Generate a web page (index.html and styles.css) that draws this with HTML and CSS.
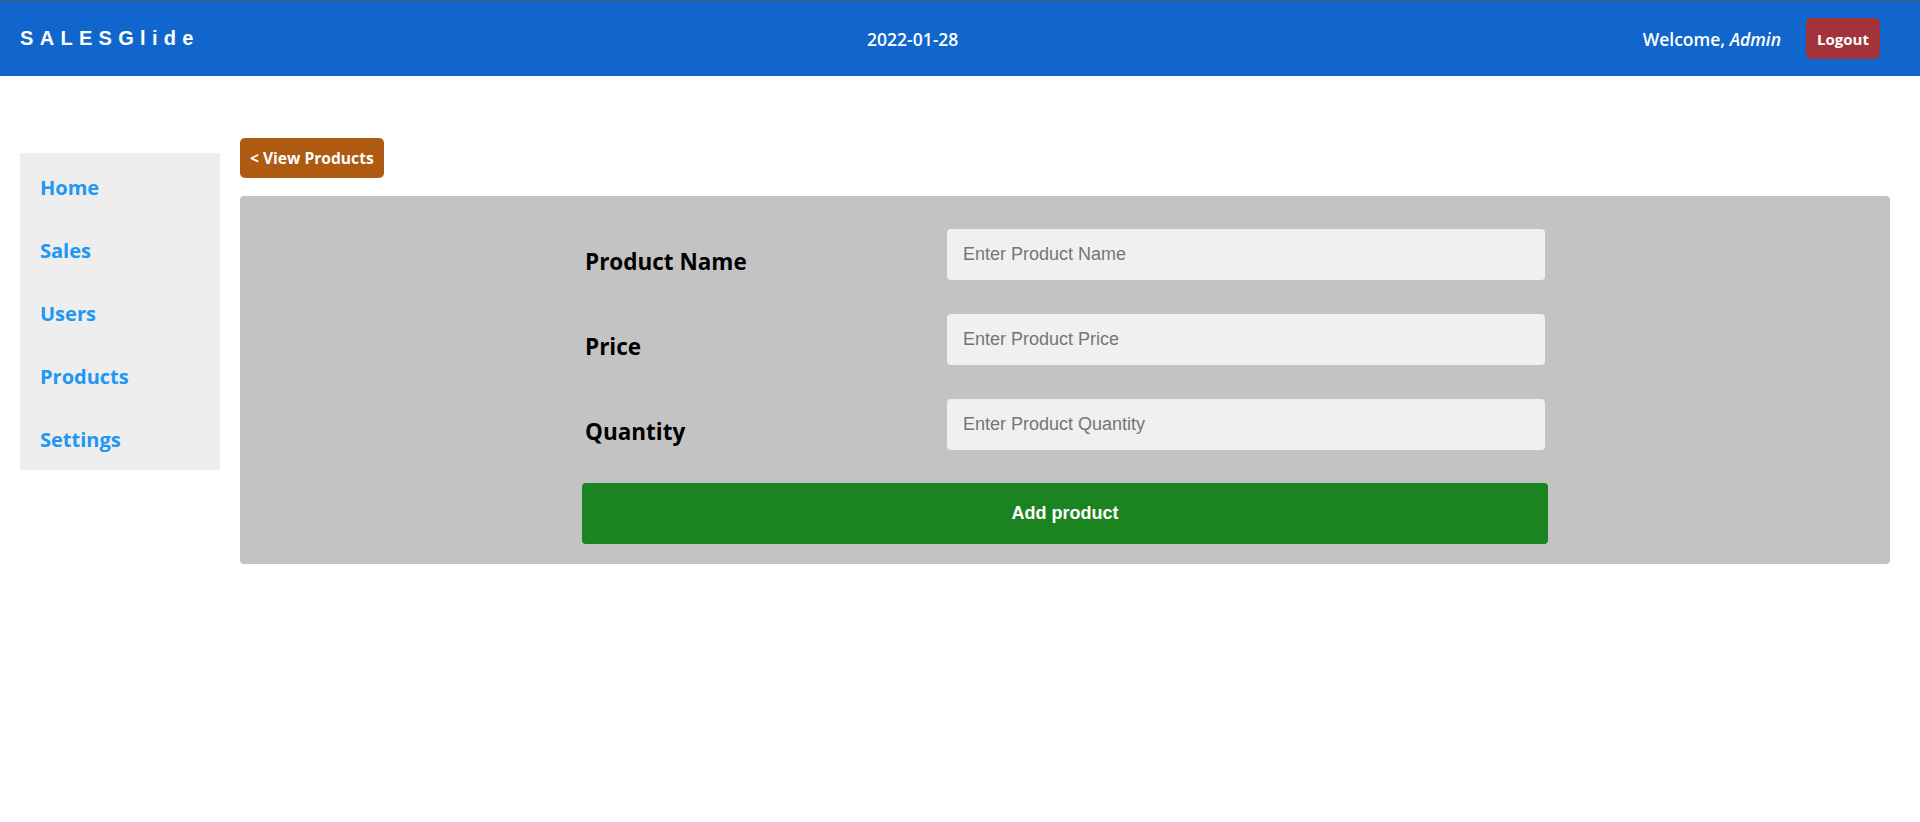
FILE: index.html
```html
<!DOCTYPE html>
<html lang="en">
<head>
<meta charset="utf-8">
<title>SALESGlide - Add Product</title>
<link rel="stylesheet" href="styles.css">
</head>
<body>
<header class="topbar">
  <div class="brand">SALESGlide</div>
  <div class="date">2022-01-28</div>
  <div class="user-area">
    <span class="welcome">Welcome, <em>Admin</em></span>
    <button class="btn-logout" type="button">Logout</button>
  </div>
</header>
<div class="layout">
  <nav class="sidebar">
    <a class="nav-link" href="#">Home</a>
    <a class="nav-link" href="#">Sales</a>
    <a class="nav-link" href="#">Users</a>
    <a class="nav-link" href="#">Products</a>
    <a class="nav-link" href="#">Settings</a>
  </nav>
  <main class="main">
    <button class="btn-back" type="button">&lt; View Products</button>
    <section class="panel">
      <form class="product-form">
        <div class="form-row">
          <label class="form-label" for="pname">Product Name</label>
          <input class="form-input" id="pname" type="text" placeholder="Enter Product Name">
        </div>
        <div class="form-row">
          <label class="form-label" for="pprice">Price</label>
          <input class="form-input" id="pprice" type="text" placeholder="Enter Product Price">
        </div>
        <div class="form-row">
          <label class="form-label" for="pqty">Quantity</label>
          <input class="form-input" id="pqty" type="text" placeholder="Enter Product Quantity">
        </div>
        <button class="btn-add" type="button">Add product</button>
      </form>
    </section>
  </main>
</div>
</body>
</html>
```

FILE: styles.css
```css
* { box-sizing: border-box; }

html, body {
  margin: 0;
  padding: 0;
  background: #ffffff;
  font-family: "Open Sans", "Noto Sans", Arial, sans-serif;
}

.topbar {
  height: 76px;
  border-top: 1px solid #4b5563;
  background: #1066cc;
  color: #ffffff;
  display: flex;
  align-items: center;
  justify-content: space-between;
  padding: 0 40px 0 20px;
}

.brand {
  font-family: "Liberation Sans", Arial, sans-serif;
  font-weight: bold;
  font-size: 20px;
  letter-spacing: 6.3px;
}

.date {
  font-size: 17.5px;
  font-weight: 600;
  margin-right: 17px;
}

.user-area {
  display: flex;
  align-items: center;
  gap: 25px;
}

.welcome {
  font-size: 17.5px;
  font-weight: 600;
}

.welcome em {
  font-style: italic;
}

.btn-logout {
  height: 41px;
  width: 74px;
  background: #a3333a;
  border: none;
  border-radius: 5px;
  color: #ffffff;
  font-family: "Open Sans", "Noto Sans", Arial, sans-serif;
  font-weight: 700;
  font-size: 15px;
  padding: 0;
}

.layout {
  display: flex;
  align-items: flex-start;
  gap: 20px;
  padding: 62px 30px 0 20px;
}

.sidebar {
  width: 200px;
  flex: none;
  margin-top: 15px;
  background: #eeeeee;
  display: flex;
  flex-direction: column;
  padding: 1px 0;
}

.nav-link {
  display: flex;
  align-items: center;
  height: 63px;
  padding: 3px 20px 0;
  color: #2196f3;
  font-weight: 700;
  font-size: 20px;
  text-decoration: none;
}

.main {
  flex: 1;
  display: flex;
  flex-direction: column;
  align-items: flex-start;
  gap: 18px;
}

.btn-back {
  height: 40px;
  padding: 0 10px;
  background: #ae5a11;
  border: none;
  border-radius: 5px;
  color: #ffffff;
  font-family: "Open Sans", "Noto Sans", Arial, sans-serif;
  font-weight: 700;
  font-size: 15.6px;
}

.panel {
  align-self: stretch;
  background: #c3c3c3;
  border-radius: 4px;
  padding: 33px 0 20px;
  display: flex;
  justify-content: center;
}

.product-form {
  width: 966px;
  display: flex;
  flex-direction: column;
  gap: 34px;
}

.form-row {
  display: grid;
  grid-template-columns: 365px 598px;
  align-items: center;
}

.form-label {
  padding: 13px 0 0 3px;
  font-size: 22.5px;
  font-weight: 700;
  color: #000000;
}

.form-input {
  height: 51px;
  border: none;
  border-radius: 4px;
  background: #f0f0f0;
  padding: 0 16px;
  font-family: "Liberation Sans", Arial, sans-serif;
  font-size: 18px;
  color: #222222;
  outline: none;
}

.form-input::placeholder {
  color: #757575;
}

.btn-add {
  margin-top: -1px;
  height: 61px;
  width: 100%;
  border: none;
  border-radius: 4px;
  background: #1b8421;
  color: #ffffff;
  font-family: "Liberation Sans", Arial, sans-serif;
  font-weight: bold;
  font-size: 18px;
}
```
